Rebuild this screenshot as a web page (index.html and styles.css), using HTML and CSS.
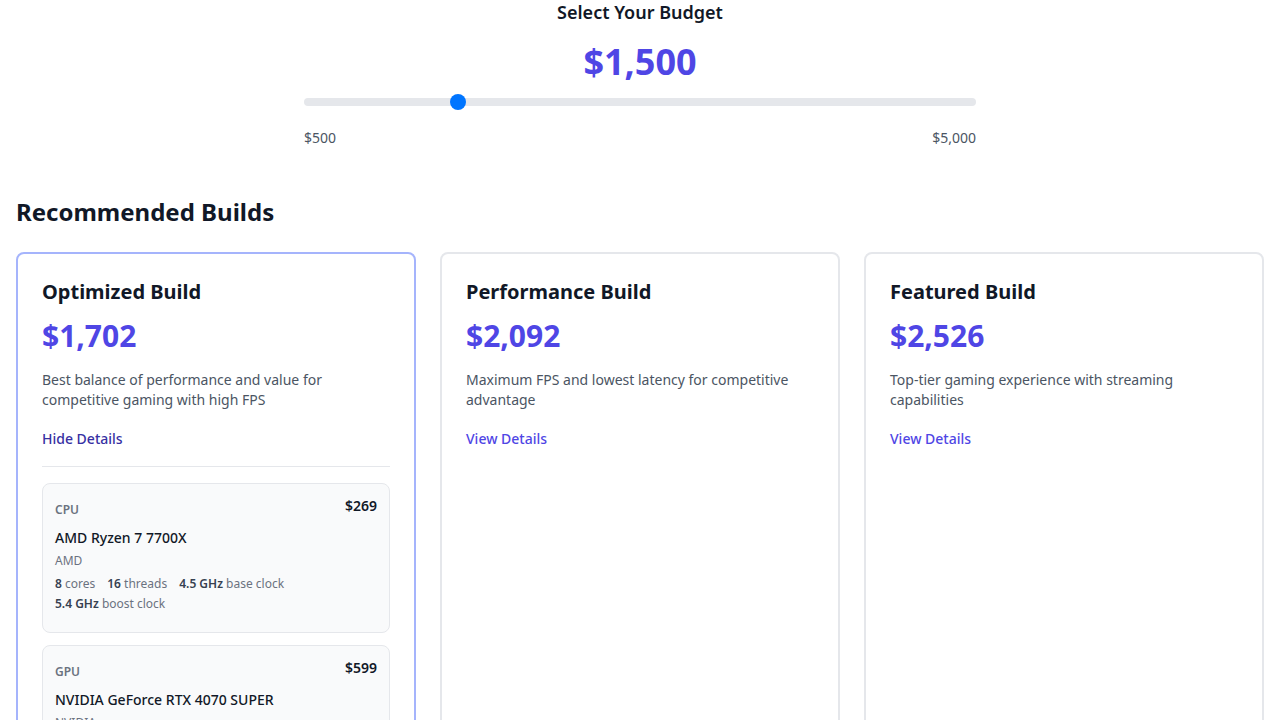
FILE: index.html
```html
<!DOCTYPE html>
<html lang="en">
<head>
<meta charset="utf-8">
<title>PC Builder</title>
<link rel="stylesheet" href="styles.css">
</head>
<body>
<div class="page">
  <section class="budget">
    <h2 class="budget-title">Select Your Budget</h2>
    <div class="budget-value">$1,500</div>
    <input class="slider" type="range" min="500" max="5000" step="50" value="1500">
    <div class="range-labels"><span>$500</span><span>$5,000</span></div>
  </section>

  <h2 class="section-title">Recommended Builds</h2>

  <div class="builds">
    <article class="build active">
      <h3 class="build-name">Optimized Build</h3>
      <div class="build-price">$1,702</div>
      <p class="build-desc">Best balance of performance and value for competitive gaming with high FPS</p>
      <a class="details-link hide" href="#">Hide Details</a>
      <div class="components">
        <div class="part">
          <div class="part-info">
            <div class="part-type">CPU</div>
            <div class="part-name">AMD Ryzen 7 7700X</div>
            <div class="part-brand">AMD</div>
            <div class="specs">
              <span><b>8</b> cores</span>
              <span><b>16</b> threads</span>
              <span><b>4.5 GHz</b> base clock</span>
              <span><b>5.4 GHz</b> boost clock</span>
            </div>
          </div>
          <div class="part-price">$269</div>
        </div>
        <div class="part">
          <div class="part-info">
            <div class="part-type">GPU</div>
            <div class="part-name">NVIDIA GeForce RTX 4070 SUPER</div>
            <div class="part-brand">NVIDIA</div>
            <div class="specs">
              <span><b>12 GB</b> GDDR6X</span>
              <span><b>2475 MHz</b> boost clock</span>
            </div>
          </div>
          <div class="part-price">$599</div>
        </div>
      </div>
    </article>

    <article class="build">
      <h3 class="build-name">Performance Build</h3>
      <div class="build-price">$2,092</div>
      <p class="build-desc">Maximum FPS and lowest latency for competitive advantage</p>
      <a class="details-link" href="#">View Details</a>
    </article>

    <article class="build">
      <h3 class="build-name">Featured Build</h3>
      <div class="build-price">$2,526</div>
      <p class="build-desc">Top-tier gaming experience with streaming capabilities</p>
      <a class="details-link" href="#">View Details</a>
    </article>
  </div>
</div>
</body>
</html>
```

FILE: styles.css
```css
* { box-sizing: border-box; }
html, body { margin: 0; padding: 0; background: #ffffff; }
body {
  font-family: "Noto Sans", "Open Sans", sans-serif;
  color: #111827;
  height: 720px;
  overflow: hidden;
}
.page { padding: 0 16px; }

.budget {
  width: 672px;
  margin: 0 auto;
  text-align: center;
}
.budget-title {
  margin: 0;
  font-size: 18px;
  line-height: 24px;
  font-weight: 600;
  color: #111827;
}
.budget-value {
  margin-top: 18px;
  font-size: 36px;
  line-height: 40px;
  font-weight: 700;
  color: #4f46e5;
}
.slider {
  -webkit-appearance: none;
  appearance: none;
  display: block;
  width: 672px;
  height: 8px;
  margin: 16px 0 0 0;
  padding: 0;
  border-radius: 8px;
  background: #e5e7eb;
  outline: none;
}
.slider::-webkit-slider-thumb {
  -webkit-appearance: none;
  appearance: none;
  width: 16px;
  height: 16px;
  border-radius: 50%;
  background: #0075ff;
  border: none;
}
.range-labels {
  display: flex;
  justify-content: space-between;
  margin-top: 22px;
  font-size: 14px;
  line-height: 20px;
  color: #4b5563;
}

.section-title {
  margin: 48px 0 0 0;
  font-size: 24px;
  line-height: 32px;
  font-weight: 700;
  color: #111827;
}

.builds {
  margin-top: 24px;
  display: grid;
  grid-template-columns: repeat(3, 1fr);
  gap: 24px;
  height: 600px;
}
.build {
  border: 2px solid #e5e7eb;
  border-radius: 8px;
  padding: 24px;
  background: #fff;
}
.build.active { border-color: #a5b4fc; }
.build-name {
  margin: 0;
  font-size: 20px;
  line-height: 28px;
  font-weight: 700;
  color: #111827;
}
.build-price {
  margin-top: 12px;
  font-size: 30px;
  line-height: 36px;
  font-weight: 700;
  color: #4f46e5;
}
.build-desc {
  margin: 16px 0 0 0;
  font-size: 14px;
  line-height: 20px;
  color: #4b5563;
}
.details-link {
  display: inline-block;
  margin-top: 19px;
  font-size: 14px;
  line-height: 20px;
  font-weight: 500;
  color: #4f46e5;
  text-decoration: none;
}
.details-link.hide { color: #3730a3; }

.components {
  margin-top: 17px;
  border-top: 1px solid #e5e7eb;
  padding-top: 16px;
  display: flex;
  flex-direction: column;
  gap: 12px;
}
.part {
  display: flex;
  justify-content: space-between;
  align-items: flex-start;
  background: #f9fafb;
  border: 1px solid #e5e7eb;
  border-radius: 8px;
  padding: 12px 12px 18px 12px;
}
.part-type {
  margin-top: 6px;
  font-size: 12px;
  line-height: 16px;
  font-weight: 600;
  color: #6b7280;
  text-transform: uppercase;
}
.part-name {
  margin-top: 10px;
  font-size: 14px;
  line-height: 20px;
  font-weight: 500;
  color: #111827;
}
.part-brand {
  margin-top: 5px;
  font-size: 12px;
  line-height: 16px;
  color: #6b7280;
}
.specs {
  margin-top: 5px;
  display: flex;
  flex-wrap: wrap;
  column-gap: 12px;
  font-size: 12px;
  line-height: 20px;
  color: #6b7280;
}
.specs b { font-weight: 600; color: #374151; }
.part-price {
  font-size: 14px;
  line-height: 20px;
  font-weight: 600;
  color: #111827;
}
```
